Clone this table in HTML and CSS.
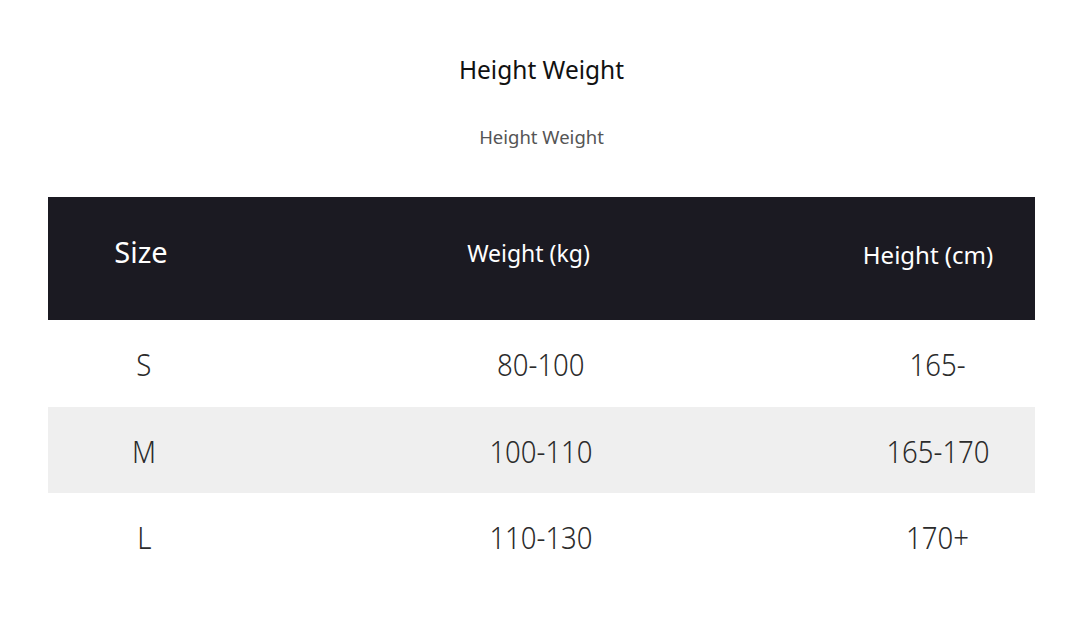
FILE: index.html
```html
<!DOCTYPE html>
<html>
<head>
<meta charset="utf-8">
<link rel="stylesheet" href="styles.css">
</head>
<body>
<div class="page">
  <h1 class="title">Height Weight</h1>
  <p class="subtitle">Height Weight</p>
  <div class="table">
    <div class="row head">
      <div class="cell c1">Size</div>
      <div class="cell c2">Weight (kg)</div>
      <div class="cell c3">Height (cm)</div>
    </div>
    <div class="row">
      <div class="cell"><span class="v">S</span></div>
      <div class="cell"><span class="v">80-100</span></div>
      <div class="cell"><span class="v">165-</span></div>
    </div>
    <div class="row alt">
      <div class="cell"><span class="v">M</span></div>
      <div class="cell"><span class="v">100-110</span></div>
      <div class="cell"><span class="v">165-170</span></div>
    </div>
    <div class="row">
      <div class="cell"><span class="v">L</span></div>
      <div class="cell"><span class="v">110-130</span></div>
      <div class="cell"><span class="v">170+</span></div>
    </div>
  </div>
</div>
</body>
</html>
```
FILE: styles.css
```css
html, body {
  margin: 0;
  padding: 0;
  background: #ffffff;
}
.page {
  width: 1080px;
  height: 624px;
  padding-top: 52px;
  box-sizing: border-box;
  display: flex;
  flex-direction: column;
  align-items: center;
}
.title {
  margin: 0;
  font-family: "Noto Sans", "Open Sans", sans-serif;
  font-weight: 400;
  font-size: 24.5px;
  line-height: 36px;
  color: #111;
  padding-left: 3px;
}
.subtitle {
  margin: 36px 0 0 0;
  font-family: "Noto Sans", "Open Sans", sans-serif;
  font-size: 18.5px;
  line-height: 26px;
  color: #555;
  padding-left: 3px;
}
.table {
  margin-top: 47px;
  width: 987px;
  margin-left: 3px;
  display: flex;
  flex-direction: column;
}
.row {
  display: grid;
  grid-template-columns: 192px 1fr 194px;
  align-items: center;
  height: 86.7px;
  font-family: "Noto Sans", sans-serif;
  font-weight: 300;
  font-size: 32px;
  color: #2b2b2b;
}
.row.alt {
  background: #efefef;
}
.cell {
  text-align: center;
}
.v {
  display: inline-block;
  transform: scaleX(0.86);
}
.row.head {
  height: 123px;
  background: #1b1a22;
  color: #ffffff;
  font-family: "Noto Sans", "Open Sans", sans-serif;
  font-weight: 400;
}
.head .c1 {
  font-size: 29px;
  padding-right: 6px;
  padding-bottom: 15px;
}
.head .c2 {
  font-size: 23px;
  padding-right: 24px;
  padding-bottom: 11px;
}
.head .c3 {
  font-size: 24px;
  padding-right: 20px;
  padding-bottom: 9px;
}
```
